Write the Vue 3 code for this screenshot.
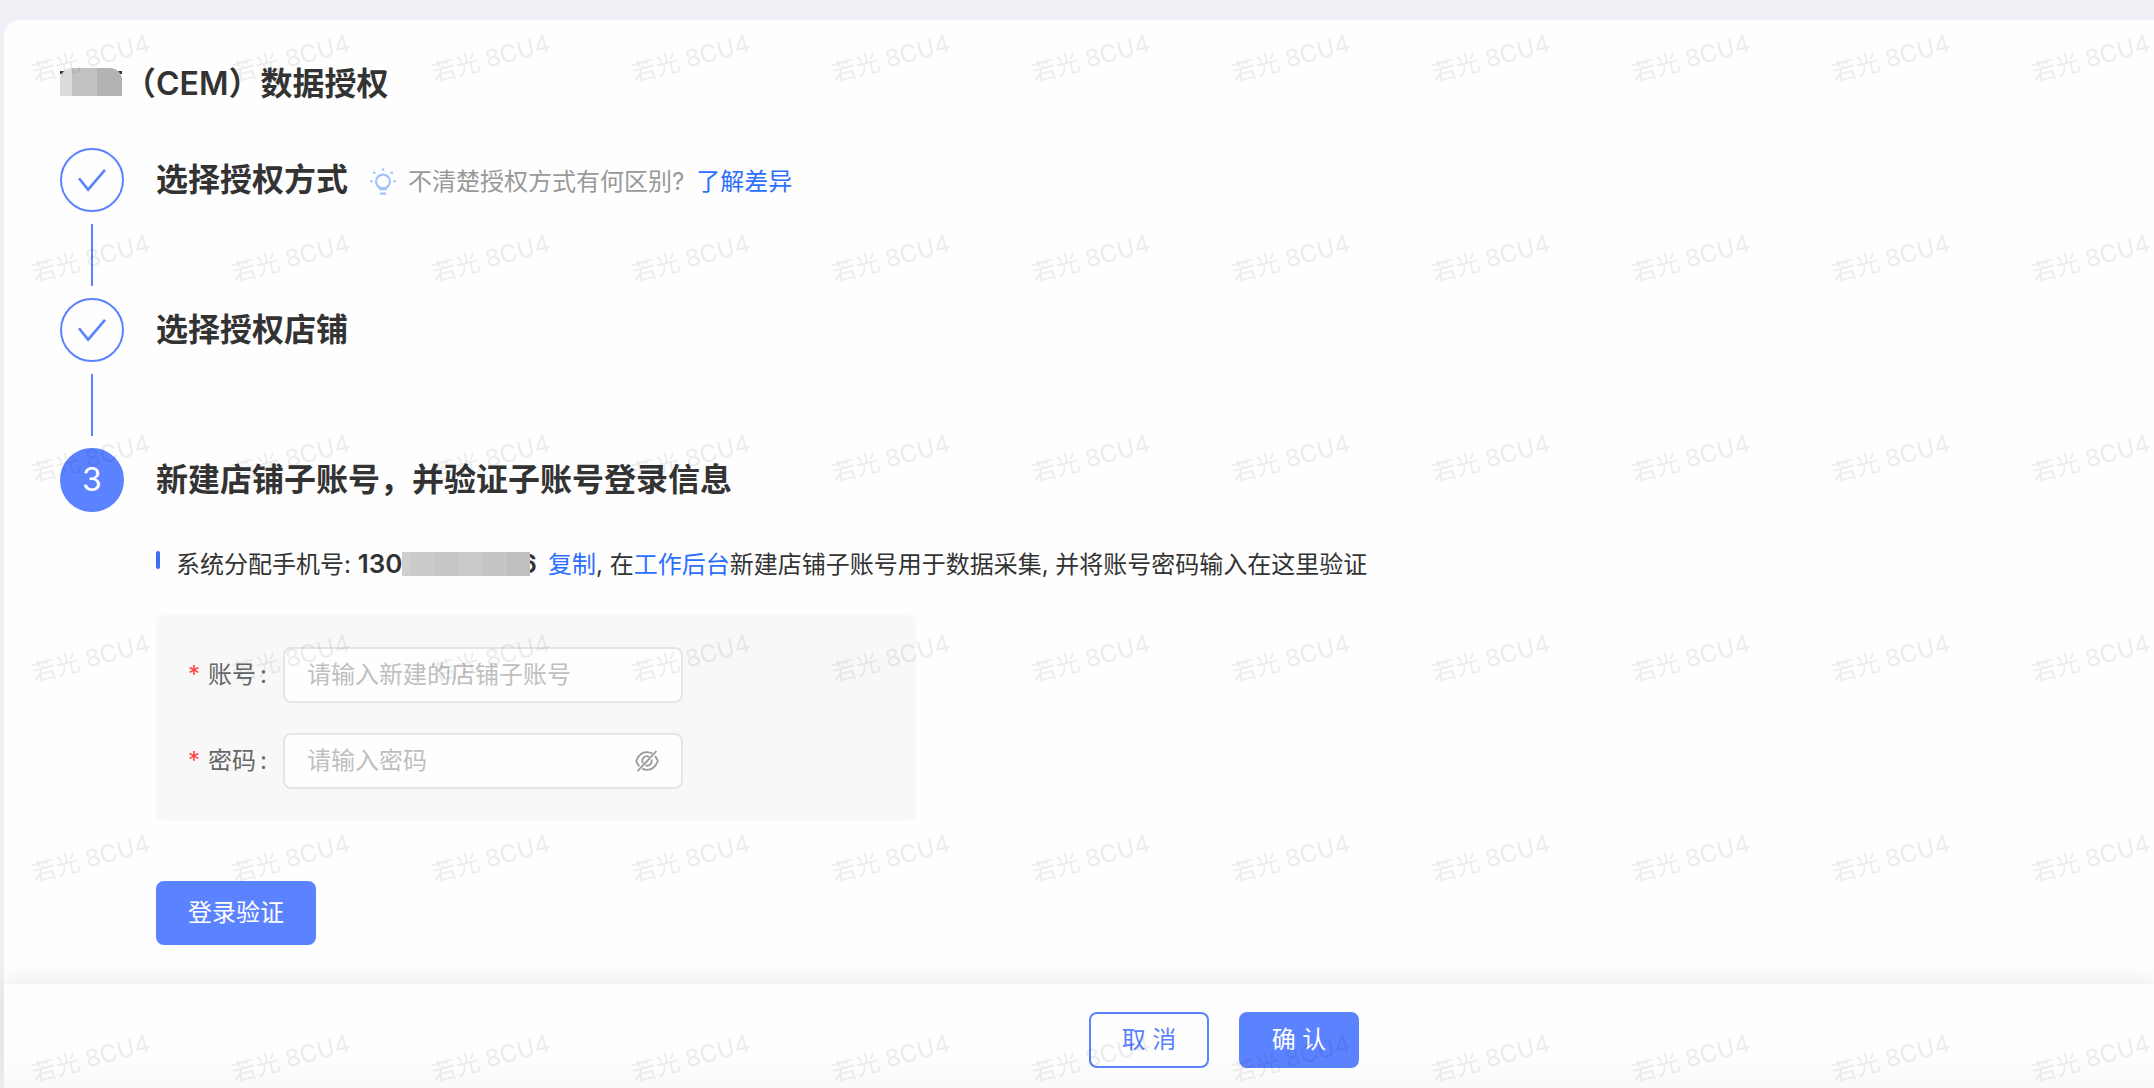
<template>
  <div class="page">
    <main class="auth-card">
      <h1 class="page-title">
        <span class="name-mask" />（CEM）数据授权
      </h1>

      <!-- 授权步骤 -->
      <ol class="steps">
        <li
          v-for="(step, index) in steps"
          :key="step.title"
          class="step"
        >
          <div class="step-rail">
            <span
              class="step-icon"
              :class="{ active: index === currentStep }"
            >
              <svg
                v-if="index < currentStep"
                class="check-icon"
                viewBox="0 0 30 24"
              >
                <path d="M2 10.2 L11.1 21.6 L28 1.8" />
              </svg>
              <template v-else>{{ index + 1 }}</template>
            </span>
            <span
              v-if="index < steps.length - 1"
              class="step-line"
            />
          </div>

          <div class="step-content">
            <div class="step-head">
              <h2 class="step-title">
                {{ step.title }}
              </h2>
              <p
                v-if="step.hint"
                class="step-hint"
              >
                <svg
                  class="bulb-icon"
                  viewBox="0 0 26 28"
                >
                  <circle
                    class="bulb-line"
                    cx="13"
                    cy="13.5"
                    r="6.9"
                  />
                  <path d="M9 19h8v3.2H9zM10 24.6h6v2.2h-6z" />
                  <circle cx="13" cy="1.6" r="1.3" />
                  <circle cx="4.3" cy="4.8" r="1.4" />
                  <circle cx="21.7" cy="4.8" r="1.4" />
                  <circle cx="1.4" cy="13.3" r="1.3" />
                  <circle cx="24.6" cy="13.3" r="1.3" />
                </svg>
                <span>{{ step.hint }}</span>
                <a
                  class="link"
                  href="#"
                >了解差异</a>
              </p>
            </div>

            <!-- 当前步骤：子账号验证 -->
            <form
              v-if="index === currentStep"
              class="verify-form"
              @submit.prevent
            >
              <div class="notice">
                <span class="notice-bar" />
                <p class="notice-text">
                  系统分配手机号: <strong class="phone">130<span class="phone-mask" />6</strong>
                  <a
                    class="link"
                    href="#"
                  >复制</a>, 在<a
                    class="link"
                    href="#"
                  >工作后台</a>新建店铺子账号用于数据采集, 并将账号密码输入在这里验证
                </p>
              </div>

              <div class="form-panel">
                <div class="form-item">
                  <label
                    class="form-label"
                    for="account"
                  ><span class="required">*</span>账号<span class="colon">:</span></label>
                  <div class="input-box">
                    <input
                      id="account"
                      v-model="account"
                      type="text"
                      placeholder="请输入新建的店铺子账号"
                    >
                  </div>
                </div>
                <div class="form-item">
                  <label
                    class="form-label"
                    for="password"
                  ><span class="required">*</span>密码<span class="colon">:</span></label>
                  <div class="input-box">
                    <input
                      id="password"
                      v-model="password"
                      :type="showPassword ? 'text' : 'password'"
                      placeholder="请输入密码"
                    >
                    <button
                      class="eye-btn"
                      type="button"
                      aria-label="显示密码"
                      @click="showPassword = !showPassword"
                    >
                      <svg viewBox="0 0 24 22">
                        <path d="M17.5 3.6C15.8 2.7 13.9 2.2 12 2.2 7.4 2.2 3.4 5.4 1.2 11c.8 2.1 1.9 3.9 3.2 5.3" />
                        <path d="M7.3 18.6c1.5.8 3.1 1.2 4.7 1.2 4.6 0 8.6-3.2 10.8-8.8-.7-1.9-1.7-3.5-2.8-4.8" />
                        <path d="M14.2 6.9A4.6 4.6 0 0 0 8 13.3M10.6 15.4A4.6 4.6 0 0 0 16.4 9.5" />
                        <path d="M9.8 13.6 14.2 9M2.5 21.2 21.5 1" />
                      </svg>
                    </button>
                  </div>
                </div>
              </div>

              <button
                class="btn btn-primary btn-verify"
                type="submit"
              >
                登录验证
              </button>
            </form>
          </div>
        </li>
      </ol>
    </main>

    <!-- 底部操作栏 -->
    <footer class="action-bar">
      <button
        class="btn btn-outline"
        type="button"
      >
        取 消
      </button>
      <button
        class="btn btn-primary"
        type="button"
      >
        确 认
      </button>
    </footer>

    <!-- 全屏水印 -->
    <svg
      class="watermark"
      aria-hidden="true"
    >
      <defs>
        <pattern
          id="watermark-tile"
          width="200"
          height="200"
          patternUnits="userSpaceOnUse"
        >
          <text
            x="35"
            y="82"
            transform="rotate(-15 35 82)"
          >若光 8CU4</text>
        </pattern>
      </defs>
      <rect
        width="100%"
        height="100%"
        fill="url(#watermark-tile)"
      />
    </svg>
  </div>
</template>

<script setup>
import { ref } from 'vue'

const steps = [
  { title: '选择授权方式', hint: '不清楚授权方式有何区别?' },
  { title: '选择授权店铺' },
  { title: '新建店铺子账号，并验证子账号登录信息' }
]

const currentStep = ref(2)
const account = ref('')
const password = ref('')
const showPassword = ref(false)
</script>

<style>
body {
  background: #eff0f5;
}
</style>

<style scoped>
.page {
  --primary: #5b82ff;
  --link: #2c6eff;
  --text: #333333;
  position: relative;
  display: flex;
  flex-direction: column;
  box-sizing: border-box;
  min-height: 100vh;
  padding: 20px 0 0 4px;
  color: var(--text);
  font-family: Inter, "Noto Sans CJK SC", sans-serif;
  font-size: 24px;
  line-height: 36px;
}

h1,
h2,
p,
ol {
  margin: 0;
  padding: 0;
}

button,
input {
  font: inherit;
}

/* 主卡片 */
.auth-card {
  flex: 1;
  padding: 40px 56px 36px;
  background: #fefefe;
  border-top-left-radius: 16px;
}

.page-title {
  display: flex;
  align-items: center;
  margin-bottom: 40px;
  font-size: 32px;
  font-weight: 600;
  line-height: 48px;
}

/* 名称打码：圆角色块下露出一点原文字的上沿 */
.name-mask {
  width: 62px;
  height: 28px;
  margin: 0 2px 4px 0;
  background: linear-gradient(var(--text), var(--text)) 0 3px / 100% 3px no-repeat;
}

.name-mask::before {
  content: "";
  display: block;
  height: 100%;
  border-radius: 12px 12px 0 0;
  background: linear-gradient(90deg, #dcdcdc 20%, #c2c2c2 20% 60%, #b3b3b3 60%);
}

/* 步骤条 */
.steps {
  list-style: none;
}

.step {
  display: flex;
  gap: 32px;
  min-height: 150px;
}

.step-rail {
  display: flex;
  flex-direction: column;
  align-items: center;
}

.step-icon {
  display: flex;
  align-items: center;
  justify-content: center;
  box-sizing: border-box;
  width: 64px;
  height: 64px;
  border: 2px solid var(--primary);
  border-radius: 50%;
  font-size: 32px;
}

.step-icon.active {
  background: var(--primary);
  color: #ffffff;
}

.check-icon {
  width: 30px;
  height: 24px;
  fill: none;
  stroke: var(--primary);
  stroke-width: 2.6;
}

.step-line {
  flex: 1;
  width: 2px;
  margin: 12px 0;
  background: var(--primary);
}

.step-content {
  flex: 1;
}

.step-head {
  display: flex;
  align-items: center;
  gap: 22px;
  height: 64px;
}

.step-title {
  font-size: 32px;
  font-weight: 600;
}

.step-hint {
  display: flex;
  align-items: center;
  gap: 12px;
  padding-top: 4px;
  color: #999999;
}

.bulb-icon {
  width: 26px;
  height: 28px;
  fill: #a3c3fb;
}

.bulb-line {
  fill: none;
  stroke: #a3c3fb;
  stroke-width: 2.2;
}

.link {
  color: var(--link);
  text-decoration: none;
}

/* 手机号说明 */
.notice {
  display: flex;
  gap: 16px;
  margin-top: 35px;
}

.notice-bar {
  width: 4px;
  height: 18px;
  margin-top: 4px;
  border-radius: 2px;
  background: #3f6cf6;
}

.phone {
  margin-right: 11px;
  font-size: 26px;
  font-weight: 600;
  line-height: 26px;
}

/* 色块压住末位数字的左侧 */
.phone-mask {
  position: relative;
  display: inline-block;
  width: 128px;
  height: 24px;
  margin-right: -10px;
  background: linear-gradient(90deg, #d0d0d0 6%, #cbcbcb 6% 25%, #c6c6c6 25% 44%, #cacaca 44% 63%, #c5c5c5 63% 82%, #bfbfbf 82%);
  vertical-align: -3px;
}

/* 表单面板 */
.form-panel {
  display: flex;
  flex-direction: column;
  gap: 30px;
  box-sizing: border-box;
  max-width: 760px;
  margin-top: 32px;
  padding: 32px;
  border-radius: 8px;
  background: #f8f8f8;
}

.form-item {
  display: flex;
  align-items: center;
}

.form-label {
  display: flex;
  width: 95px;
  color: #666666;
}

.required {
  width: 20px;
  color: #ff4040;
}

.colon {
  margin-left: 4px;
}

.input-box {
  display: flex;
  align-items: center;
  box-sizing: border-box;
  width: 400px;
  min-width: 0;
  height: 56px;
  padding: 0 22px;
  border: 2px solid #e5e5e5;
  border-radius: 8px;
  background: #fefefe;
}

.input-box input {
  flex: 1;
  min-width: 0;
  padding: 0;
  border: 0;
  outline: none;
  background: transparent;
  color: var(--text);
}

.input-box input::placeholder {
  color: #bfbfbf;
  opacity: 1;
}

.eye-btn {
  display: flex;
  padding: 0;
  border: 0;
  background: transparent;
  cursor: pointer;
}

.eye-btn svg {
  width: 24px;
  height: 22px;
  fill: none;
  stroke: #999999;
  stroke-width: 1.8;
}

/* 按钮 */
.btn {
  box-sizing: border-box;
  min-width: 120px;
  height: 56px;
  padding: 0 30px;
  border: 2px solid var(--primary);
  border-radius: 8px;
  cursor: pointer;
}

.btn-primary {
  background: var(--primary);
  color: #ffffff;
}

.btn-outline {
  background: #fefefe;
  color: var(--primary);
}

.btn-verify {
  height: 64px;
  margin-top: 60px;
}

/* 底部操作栏 */
.action-bar {
  display: flex;
  justify-content: center;
  gap: 30px;
  box-sizing: border-box;
  height: 104px;
  padding: 28px 0 20px 290px;
  background: linear-gradient(#fefefe 70%, #f9f9f9);
  box-shadow: 0 -4px 20px rgba(0, 0, 0, 0.08);
}

/* 水印 */
.watermark {
  position: absolute;
  inset: 0;
  width: 100%;
  height: 100%;
  pointer-events: none;
}

.watermark text {
  fill: rgba(0, 0, 0, 0.07);
  font-size: 24px;
  font-weight: 400;
}
</style>
